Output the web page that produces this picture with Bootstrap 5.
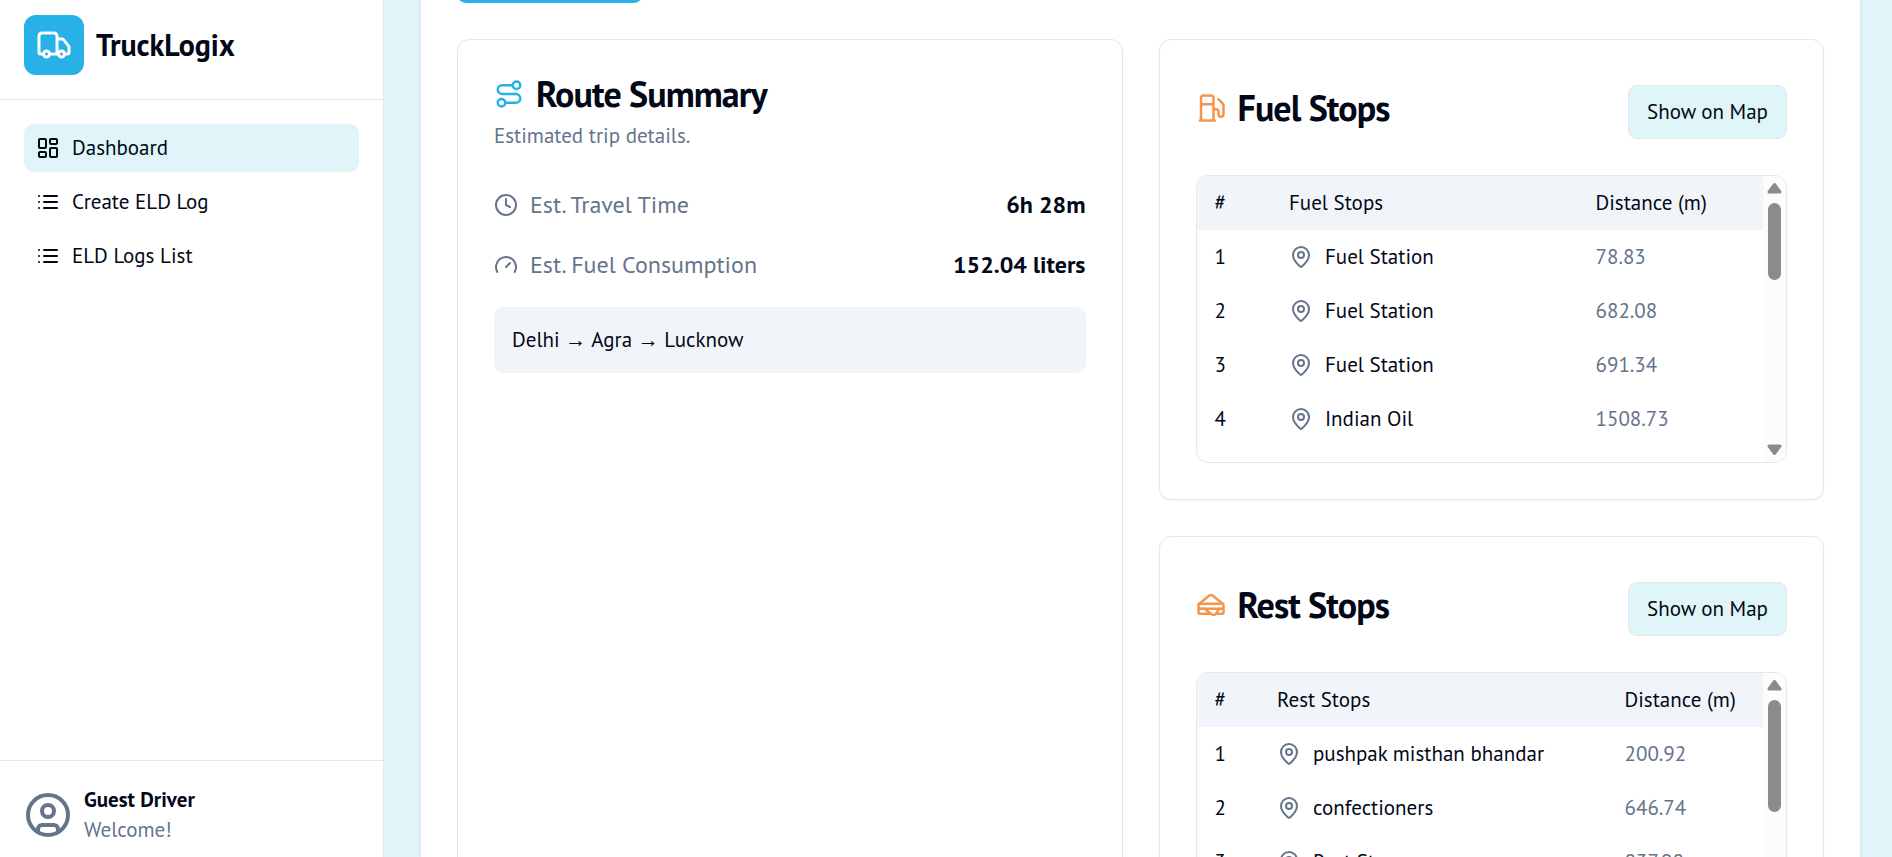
<!DOCTYPE html>
<html lang="en">
<head>
<meta charset="utf-8">
<meta name="viewport" content="width=device-width, initial-scale=1">
<title>TruckLogix</title>
<link href="https://cdn.jsdelivr.net/npm/bootstrap@5.3.0/dist/css/bootstrap.min.css" rel="stylesheet">
<style>
  :root { --ink: #020817; --soft: #64748b; --line: #e2e8f0; --haze: #f1f5f9; --tint: #e0f5f8; --brand: #27b1e6; --warm: #f6954a; }
  html, body { height: 100%; overflow: hidden; }
  body { font-family: "PT Sans", "Open Sans", sans-serif; font-size: 21px; line-height: 30px; color: var(--ink); background: var(--tint); }
  svg { fill: none; stroke: currentColor; stroke-width: 2; stroke-linecap: round; stroke-linejoin: round; flex: none; }
  .i24 { width: 24px; height: 24px; }
  .i30 { width: 30px; height: 30px; }
  .soft { color: var(--soft); }
  .ic-brand { color: var(--brand); }
  .ic-warm { color: var(--warm); }

  .side { width: 384px; background: #fff; border-right: 1px solid var(--line); }
  .side-head { padding: 15px 24px 24px; gap: 12px; border-bottom: 1px solid var(--line); }
  .logo-tile { width: 60px; height: 60px; border-radius: 12px; background: var(--brand); color: #fff; }
  .logo-tile svg { width: 36px; height: 36px; }
  .brand-name { font-size: 30px; line-height: 42px; font-weight: 700; }
  .side-nav { padding: 24px; gap: 6px; }
  .side-nav .nav-link { display: flex; align-items: center; height: 48px; gap: 12px; padding: 0 12px; border-radius: 9px; color: var(--ink); }
  .side-nav .nav-link.active { background: var(--tint); }
  .side-foot { height: 97px; padding: 24px 24px 0; gap: 12px; border-top: 1px solid var(--line); }
  .side-foot svg { width: 48px; height: 48px; margin-top: 6px; }

  .sheet { margin: 0 31px 0 36px; padding: 0 36px; background: #fff; border: solid var(--line); border-width: 0 1px; box-shadow: 0 1px 3px rgba(0,0,0,.08); overflow: hidden; }
  .plan-btn { width: 186px; height: 60px; padding: 0; border: 0; border-radius: 9px; background: var(--brand); margin: -57px 0 36px; }
  .panels { --bs-gutter-x: 36px; }
  .stack { gap: 36px; }
  .panel { background: #fff; border: 1px solid var(--line); border-radius: 12px; padding: 36px; box-shadow: 0 1px 2px rgba(0,0,0,.05); }
  .tall { height: 900px; }
  .panel-title { font-size: 36px; line-height: 36px; font-weight: 700; letter-spacing: -.025em; gap: 12px; margin: 0; }
  .panel-note { margin: 0; padding: 9px 0 36px; }
  .stat { font-size: 24px; line-height: 36px; margin-bottom: 24px; gap: 12px; }
  .trip { background: var(--haze); border-radius: 9px; padding: 18px; }
  .trip .arrow { font-family: "Liberation Serif", serif; line-height: 1; }
  .btn-map { height: 54px; padding: 0 18px; font-size: 21px; line-height: 30px; color: var(--ink); background: var(--tint); border: 1px solid var(--line); border-radius: 9px; }
  .head-row { padding: 9px 0 36px; }
  .head-row .panel-title { margin-bottom: 8px; }

  .listbox { height: 288px; border: 1px solid var(--line); border-radius: 12px; overflow: hidden; }
  .listbox .scroller { overflow: hidden; }
  .listbox table { width: 100%; table-layout: fixed; margin: 0; color: var(--ink); }
  .listbox th, .listbox td { height: 54px; padding: 0 18px; font-weight: 400; vertical-align: middle; }
  .listbox thead { background: var(--haze); }
  .place { gap: 12px; }
  .bar { width: 23px; background: #fcfcfc; padding: 6px 0; }
  .bar svg { width: 15px; height: 12px; fill: #8b8b8b; stroke: #8b8b8b; stroke-width: 3; }
  .thumb { width: 13px; border-radius: 7px; background: #8b8b8b; margin-top: 9px; }
  .c1 { width: 74.5px; } .c2 { width: 306.5px; }
  .rest .c1 { width: 62.5px; } .rest .c2 { width: 347.5px; }
</style>
</head>
<body>
<svg class="d-none">
  <symbol id="pin" viewBox="0 0 24 24"><path d="M20 10c0 4.993-5.539 10.193-7.399 11.799a1 1 0 0 1-1.202 0C9.539 20.193 4 14.993 4 10a8 8 0 0 1 16 0"/><circle cx="12" cy="10" r="3"/></symbol>
  <symbol id="list" viewBox="0 0 24 24"><path d="M3 6h.01M3 12h.01M3 18h.01M8 6h13M8 12h13M8 18h13"/></symbol>
</svg>
<div class="d-flex h-100">
  <aside class="side d-flex flex-column flex-shrink-0 h-100">
    <div class="side-head d-flex align-items-center">
      <div class="logo-tile d-flex align-items-center justify-content-center">
        <svg viewBox="0 0 24 24"><path d="M14 18V6a2 2 0 0 0-2-2H4a2 2 0 0 0-2 2v11a1 1 0 0 0 1 1h2M15 18H9M19 18h2a1 1 0 0 0 1-1v-3.65a1 1 0 0 0-.22-.624l-3.48-4.35A1 1 0 0 0 17.52 8H14"/><circle cx="17" cy="18" r="2"/><circle cx="7" cy="18" r="2"/></svg>
      </div>
      <div class="brand-name">TruckLogix</div>
    </div>
    <nav class="side-nav nav flex-column flex-nowrap flex-grow-1">
      <a class="nav-link active" href="#"><svg class="i24" viewBox="0 0 24 24"><rect x="3" y="3" width="7" height="9" rx="1"/><rect x="14" y="3" width="7" height="5" rx="1"/><rect x="14" y="12" width="7" height="9" rx="1"/><rect x="3" y="16" width="7" height="5" rx="1"/></svg>Dashboard</a>
      <a class="nav-link" href="#"><svg class="i24"><use href="#list"/></svg>Create ELD Log</a>
      <a class="nav-link" href="#"><svg class="i24"><use href="#list"/></svg>ELD Logs List</a>
    </nav>
    <div class="side-foot d-flex align-items-start flex-shrink-0">
      <svg class="soft" viewBox="0 0 24 24"><circle cx="12" cy="12" r="10"/><circle cx="12" cy="10" r="3"/><path d="M7 20.662V19a2 2 0 0 1 2-2h6a2 2 0 0 1 2 2v1.662"/></svg>
      <div><div class="fw-bold">Guest Driver</div><div class="soft">Welcome!</div></div>
    </div>
  </aside>

  <main class="sheet flex-grow-1">
    <button class="plan-btn d-block" type="button" aria-label="Plan trip"></button>
    <div class="row panels">
      <div class="col-6">
        <section class="panel tall">
          <h2 class="panel-title d-flex align-items-center"><svg class="i30 ic-brand" viewBox="0 0 24 24"><circle cx="6" cy="19" r="3"/><path d="M9 19h8.5a3.5 3.5 0 0 0 0-7h-11a3.5 3.5 0 0 1 0-7H15"/><circle cx="18" cy="5" r="3"/></svg>Route Summary</h2>
          <p class="soft panel-note">Estimated trip details.</p>
          <div class="stat d-flex align-items-center">
            <svg class="i24 soft" viewBox="0 0 24 24"><circle cx="12" cy="12" r="10"/><path d="M12 6v6l4 2"/></svg>
            <span class="soft flex-grow-1">Est. Travel Time</span><strong>6h 28m</strong>
          </div>
          <div class="stat d-flex align-items-center">
            <svg class="i24 soft" viewBox="0 0 24 24"><path d="m12 14 4-4M3.34 19a10 10 0 1 1 17.32 0"/></svg>
            <span class="soft flex-grow-1">Est. Fuel Consumption</span><strong>152.04 liters</strong>
          </div>
          <div class="trip">Delhi <span class="arrow">→</span> Agra <span class="arrow">→</span> Lucknow</div>
        </section>
      </div>
      <div class="col-6 d-flex flex-column stack">
        <section class="panel">
          <div class="head-row d-flex align-items-center justify-content-between">
            <h2 class="panel-title d-flex align-items-center"><svg class="i30 ic-warm" viewBox="0 0 24 24"><path d="M3 22h12M4 9h10M14 22V4a2 2 0 0 0-2-2H6a2 2 0 0 0-2 2v18M14 13h2a2 2 0 0 1 2 2v2a2 2 0 0 0 4 0V9.83a2 2 0 0 0-.59-1.42L18 5"/></svg>Fuel Stops</h2>
            <button class="btn btn-map" type="button">Show on Map</button>
          </div>
          <div class="listbox d-flex">
            <div class="scroller flex-grow-1">
              <table>
                <colgroup><col class="c1"><col class="c2"><col></colgroup>
                <thead><tr><th>#</th><th>Fuel Stops</th><th>Distance (m)</th></tr></thead>
                <tbody>
                  <tr><td>1</td><td><div class="place d-flex align-items-center"><svg class="i24 soft"><use href="#pin"/></svg>Fuel Station</div></td><td class="soft">78.83</td></tr>
                  <tr><td>2</td><td><div class="place d-flex align-items-center"><svg class="i24 soft"><use href="#pin"/></svg>Fuel Station</div></td><td class="soft">682.08</td></tr>
                  <tr><td>3</td><td><div class="place d-flex align-items-center"><svg class="i24 soft"><use href="#pin"/></svg>Fuel Station</div></td><td class="soft">691.34</td></tr>
                  <tr><td>4</td><td><div class="place d-flex align-items-center"><svg class="i24 soft"><use href="#pin"/></svg>Indian Oil</div></td><td class="soft">1508.73</td></tr>
                </tbody>
              </table>
            </div>
            <div class="bar d-flex flex-column align-items-center flex-shrink-0">
              <svg viewBox="0 0 15 12"><path d="M7.5 2.5 13 10H2z"/></svg>
              <div class="thumb" style="height:77px"></div>
              <svg class="mt-auto" viewBox="0 0 15 12"><path d="M7.5 9.5 13 2H2z"/></svg>
            </div>
          </div>
        </section>
        <section class="panel rest">
          <div class="head-row d-flex align-items-center justify-content-between">
            <h2 class="panel-title d-flex align-items-center"><svg class="i30 ic-warm" viewBox="0 0 24 24"><path d="m2.37 11.223 8.372-6.777a2 2 0 0 1 2.516 0l8.371 6.777M21 15a1 1 0 0 1 1 1v2a1 1 0 0 1-1 1h-5.25M3 15a1 1 0 0 0-1 1v2a1 1 0 0 0 1 1h9M6.67 15l6.13 4.6a2 2 0 0 0 2.8-.4l3.15-4.2"/><rect x="2" y="11" width="20" height="4" rx="1"/></svg>Rest Stops</h2>
            <button class="btn btn-map" type="button">Show on Map</button>
          </div>
          <div class="listbox d-flex">
            <div class="scroller flex-grow-1">
              <table>
                <colgroup><col class="c1"><col class="c2"><col></colgroup>
                <thead><tr><th>#</th><th>Rest Stops</th><th>Distance (m)</th></tr></thead>
                <tbody>
                  <tr><td>1</td><td><div class="place d-flex align-items-center"><svg class="i24 soft"><use href="#pin"/></svg>pushpak misthan bhandar</div></td><td class="soft">200.92</td></tr>
                  <tr><td>2</td><td><div class="place d-flex align-items-center"><svg class="i24 soft"><use href="#pin"/></svg>confectioners</div></td><td class="soft">646.74</td></tr>
                  <tr><td>3</td><td><div class="place d-flex align-items-center"><svg class="i24 soft"><use href="#pin"/></svg>Rest Stop</div></td><td class="soft">837.98</td></tr>
                </tbody>
              </table>
            </div>
            <div class="bar d-flex flex-column align-items-center flex-shrink-0">
              <svg viewBox="0 0 15 12"><path d="M7.5 2.5 13 10H2z"/></svg>
              <div class="thumb" style="height:112px"></div>
              <svg class="mt-auto" viewBox="0 0 15 12"><path d="M7.5 9.5 13 2H2z"/></svg>
            </div>
          </div>
        </section>
      </div>
    </div>
  </main>
</div>
<script src="https://cdn.jsdelivr.net/npm/bootstrap@5.3.0/dist/js/bootstrap.bundle.min.js"></script>
</body>
</html>
